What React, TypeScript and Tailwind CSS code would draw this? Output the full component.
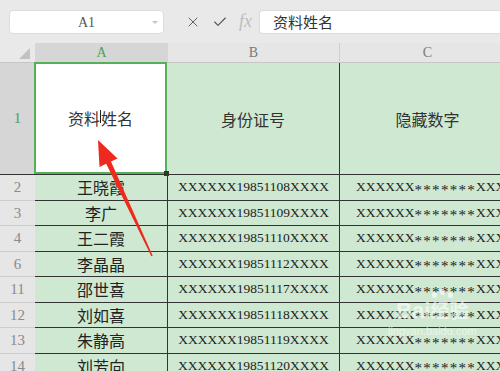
import React from "react";
import { X, Check } from "lucide-react";

const rows = [
  { n: "2", name: "王晓霞", id: "XXXXXX19851108XXXX" },
  { n: "3", name: "李广", id: "XXXXXX19851109XXXX" },
  { n: "4", name: "王二霞", id: "XXXXXX19851110XXXX" },
  { n: "6", name: "李晶晶", id: "XXXXXX19851112XXXX" },
  { n: "11", name: "邵世喜", id: "XXXXXX19851117XXXX" },
  { n: "12", name: "刘如喜", id: "XXXXXX19851118XXXX" },
  { n: "13", name: "朱静高", id: "XXXXXX19851119XXXX" },
  { n: "14", name: "刘芳向", id: "XXXXXX19851120XXXX" },
];

const cjk = "font-['Noto_Sans_CJK_SC',sans-serif]";
const serif = "font-['Liberation_Serif','Noto_Sans_CJK_SC',serif]";

export default function App() {
  return (
    <div className="relative w-[500px] h-[371px] overflow-hidden bg-[#e9e9e9]">
      {/* formula bar */}
      <div className="h-[43px] flex items-start pt-[10px] pl-[9px]">
        <div className="w-[155px] shrink-0 h-[24px] bg-white rounded-[4px] border border-[#dcdcdc] flex items-center relative">
          <span className={`flex-1 text-center text-[14px] text-[#555] ${serif}`}>A1</span>
          <svg className="absolute right-[5px] top-[10px]" width="6" height="4" viewBox="0 0 6 4">
            <path d="M0 0 L6 0 L3 3 Z" fill="#c4c4c4" />
          </svg>
        </div>
        <div className="flex items-center h-[24px] ml-[21px] gap-[11px] text-[#555] shrink-0">
          <X size={16} strokeWidth={1.4} />
          <Check size={16} strokeWidth={1.7} />
          <span className="text-[18px] italic text-[#bdbdbd] font-['Liberation_Serif',serif] -mt-[2px]">fx</span>
        </div>
        <div className="ml-[7px] flex-1 h-[24px] bg-white rounded-l-[4px] border border-[#dcdcdc] border-r-0 flex items-center pl-[13px]">
          <span className={`text-[15px] text-[#333] ${cjk}`}>资料姓名</span>
        </div>
      </div>

      {/* column headers */}
      <div className="flex h-[20px] border-b border-[#c6c6c6]">
        <div className="w-[35px] shrink-0 relative bg-[#e9e9e9]">
          <svg className="absolute left-[19px] top-[5px]" width="11" height="11" viewBox="0 0 11 11">
            <path d="M11 0 L11 11 L0 11 Z" fill="#c2c2c2" />
          </svg>
        </div>
        <div className={`w-[133px] shrink-0 bg-[#d6d6d6] flex items-center justify-center text-[14px] text-[#4f9f55] ${serif}`}>A</div>
        <div className={`w-[172px] shrink-0 bg-[#e6e6e6] border-r border-[#cfcfcf] flex items-center justify-center text-[14px] text-[#7a7a7a] ${serif}`}>B</div>
        <div className={`w-[175px] shrink-0 bg-[#e6e6e6] flex items-center justify-center text-[14px] text-[#7a7a7a] ${serif}`}>C</div>
      </div>

      {/* row 1 */}
      <div className="flex h-[112px] border-b border-[#333]">
        <div className={`w-[35px] shrink-0 bg-[#d6d6d6] flex items-center justify-center text-[15px] text-[#4f9f55] ${serif}`}>1</div>
        <div className="w-[133px] shrink-0 bg-white border-2 border-[#55b05a] -ml-px -mt-px flex items-center justify-center relative">
          <span className={`text-[16px] text-[#333] ${cjk} flex items-center`}>
            资料<span className="inline-block w-px h-[13px] bg-[#222] -mt-[4px]" />姓名
          </span>
          <div className="absolute -right-[4px] -bottom-[4px] w-[5px] h-[5px] bg-[#2f3a2f]" />
        </div>
        <div className={`w-[173px] shrink-0 bg-[#cfe8d1] border-r border-[#333] flex items-center justify-center text-[16px] text-[#333] ${cjk}`}>身份证号</div>
        <div className={`w-[175px] shrink-0 bg-[#cfe8d1] flex items-center justify-center text-[16px] text-[#333] ${cjk}`}>隐藏数字</div>
      </div>

      {/* data rows */}
      {rows.map((r) => (
        <div key={r.n} className="flex h-[25.5px]">
          <div className={`w-[35px] shrink-0 bg-[#e6e6e6] border-b border-[#cdcdcd] flex items-center justify-center text-[15px] text-[#8a8a8a] ${serif}`}>{r.n}</div>
          <div className={`w-[133px] shrink-0 bg-[#cfe8d1] border-b border-r border-[#333] flex items-center justify-center text-[16px] text-[#222] ${cjk}`}>{r.name}</div>
          <div className={`w-[172px] shrink-0 bg-[#cfe8d1] border-b border-r border-[#333] flex items-center justify-center text-[13.5px] text-[#222] ${serif}`}>{r.id}</div>
          <div className={`w-[175px] shrink-0 bg-[#cfe8d1] border-b border-[#333] flex items-center pl-[16px] text-[13.5px] text-[#222] whitespace-nowrap ${serif}`}>
            XXXXXX<span className="inline-block text-[15px] tracking-[1.3px] leading-none translate-y-[3px]">*******</span>XXXX
          </div>
        </div>
      ))}

      {/* red arrow */}
      <svg className="absolute left-0 top-0 pointer-events-none" width="500" height="371" viewBox="0 0 500 371">
        <polygon
          points="98,140 117.5,158.5 111,161.6 152.7,255.7 151.3,256.3 106.2,163.8 99.5,167"
          fill="#ee2a1f"
        />
      </svg>

      {/* watermark */}
      <div className="absolute left-[388px] top-[292px] flex flex-col items-center pointer-events-none text-white/60">
        <div className="flex gap-[3px] ml-[20px]">
          <div className="w-[5px] h-[6px] rounded-full bg-white/60" />
          <div className="w-[5px] h-[6px] rounded-full bg-white/60 -mt-[3px]" />
          <div className="w-[5px] h-[6px] rounded-full bg-white/60" />
        </div>
        <div className="text-[22px] font-bold leading-[26px] font-['Liberation_Sans','Noto_Sans_CJK_SC',sans-serif]">Bai<span className="text-[19px]">经验</span></div>
        <div className="text-[11px] leading-[12px] font-['Liberation_Sans',sans-serif]">jingyan.baidu.com</div>
      </div>
    </div>
  );
}
